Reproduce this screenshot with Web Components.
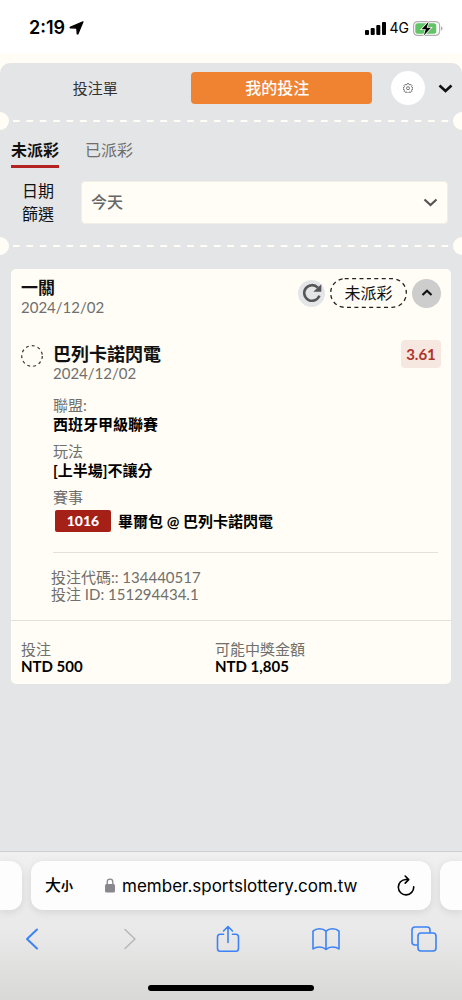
<!DOCTYPE html>
<html lang="zh-Hant">
<head>
<meta charset="utf-8">
<meta name="viewport" content="width=device-width, initial-scale=1">
<title>我的投注</title>
<style>
  :root {
    --cream: #fffdf5;
    --grey: #e4e5e7;
    --orange: #ef8332;
    --red: #b3231f;
    --muted: #6f6f6d;
    --rule: #e5e0d8;
    --ui: Inter, "Noto Sans CJK TC", sans-serif;
  }
  body {
    margin: 0;
    background: #fff;
    font: 15px/18px Lato, "Noto Sans CJK TC", sans-serif;
    color: #111;
  }
</style>
</head>
<body>
<phone-app></phone-app>

<script>
const define = (name, css, html) => {
  customElements.define(name, class extends HTMLElement {
    constructor() {
      super();
      this.attachShadow({ mode: 'open' }).innerHTML =
        `<style>*{box-sizing:border-box}button{font:inherit;color:inherit;border:0;padding:0;background:none}svg{display:block}${css}</style>${html}`;
    }
  });
};

define('status-bar', `
  :host { display: flex; align-items: center; justify-content: space-between; height: 53px; box-sizing: border-box;
          padding: 3px 18px 0 29px; background: #fff; color: #000; font-family: var(--ui); }
  div { display: flex; align-items: center; gap: 4px; }
  time { font-size: 18px; font-weight: 600; }
  .net { font-size: 14px; }
`, `
  <div>
    <time>2:19</time>
    <svg width="15" height="14" viewBox="0 0 15 14" aria-hidden="true"><path d="M14 .8 8.900 13 8.200 12.900 7.800 7.100 1.200 6.800 1.100 6.200Z" fill="#000" stroke="#000" stroke-width="1.200" stroke-linejoin="round"/></svg>
  </div>
  <div>
    <svg width="21" height="13" viewBox="0 0 21 13" aria-hidden="true"><rect y="8" width="4" height="5" rx="1"/><rect x="5.700" y="6" width="4" height="7" rx="1"/><rect x="11.300" y="3" width="4" height="10" rx="1"/><rect x="17" width="4" height="13" rx="1"/></svg>
    <span class="net">4G</span>
    <svg width="31" height="15" viewBox="0 0 31 15" aria-hidden="true">
      <rect x=".6" y=".6" width="26" height="13.800" rx="4" fill="#fff" stroke="#b0b0b0" stroke-width="1.200"/>
      <rect x="2.300" y="2.300" width="21" height="10.400" rx="2.500" fill="#62c466"/>
      <path d="M28 5.300q1.600.8 1.600 2.200T28 9.700Z" fill="#b0b0b0"/>
      <path d="M15.600.8 8.600 8.200h4.200l-2 6.200 7.200-7.600h-4.300Z" stroke="#fff" stroke-width="1.500" paint-order="stroke"/>
    </svg>
  </div>
`);

define('tab-header', `
  :host { display: flex; align-items: center; padding: 8px 9px 0 0; }
  nav { flex: 1; display: grid; grid-template-columns: 21fr 20fr; }
  .tab { height: 32px; border-radius: 4px; color: #333; }
  .tab[aria-selected=true] { padding-right: 8px; background: var(--orange); color: #fff; font-size: 16px; font-weight: 500; }
  .gear { display: grid; place-items: center; width: 34px; height: 34px; border-radius: 50%; background: #fff; margin: 0 13px 0 19px; }
`, `
  <nav role="tablist">
    <button class="tab" role="tab" aria-selected="false">投注單</button>
    <button class="tab" role="tab" aria-selected="true">我的投注</button>
  </nav>
  <button class="gear" aria-label="設定">
    <svg width="10" height="10" viewBox="0 0 10 10" fill="none" stroke="#555" stroke-width=".8" stroke-linejoin="round"><path d="M4.200.6h1.600l.3 1 .9.400.9-.6 1.100 1.100-.5.9.4.9 1 .3v1.600l-1 .2-.4.9.5.9-1.100 1.100-.9-.5-.9.400-.3 1H4.200l-.3-1-.9-.4-.9.500L1 8.200l.5-.9-.4-.9-1-.2V4.600l1-.3.4-.9L1 2.500l1.100-1.100.9.6.9-.4Z"/><circle cx="5" cy="5.200" r="1.500"/></svg>
  </button>
  <button aria-label="收合">
    <svg width="15" height="16" viewBox="0 0 15 16" fill="none" stroke="#111" stroke-width="2.600"><path d="m1.500 5.500 6 5.500 6-5.500"/></svg>
  </button>
`);

define('ticket-perforation', `
  :host { display: flex; align-items: center; justify-content: space-between; height: 18px; }
  i { width: 9px; height: 18px; background: var(--cream); border-radius: 0 9px 9px 0; }
  i:last-child { border-radius: 9px 0 0 9px; }
  hr { flex: 1; height: 2px; margin: 0 -2px 0 4px; border: 0;
       background: linear-gradient(90deg, var(--cream) 7px, transparent 7px) 0 0 / calc(100% / 33) 2px repeat-x; }
`, `<i></i><hr><i></i>`);

define('bet-filter', `
  :host { display: block; padding: 8px 14px 12px 11px; }
  nav { display: flex; gap: 26px; }
  nav button { height: 30px; padding: 0 0 3px; font-size: 16px; line-height: 24px; border-bottom: 3px solid transparent; color: var(--muted); }
  nav button[aria-selected=true] { font-weight: 700; color: #111; border-color: var(--red); }
  .row { display: flex; align-items: center; margin-top: 11px; }
  label { width: 54px; margin-right: 16px; padding: 0 11px; text-align: center; font-size: 16px; line-height: 23px; }
  .box { flex: 1; display: grid; align-items: center; }
  .box > * { grid-area: 1 / 1; }
  select { appearance: none; width: 100%; height: 43px; padding: 0 9px; border: 1px solid #f1eee4; border-radius: 4px;
           background: var(--cream); font: inherit; font-size: 16px; font-weight: 500; color: #666; }
  svg { justify-self: end; margin-right: 10px; pointer-events: none; }
`, `
  <nav role="tablist">
    <button role="tab" aria-selected="true">未派彩</button>
    <button role="tab" aria-selected="false">已派彩</button>
  </nav>
  <div class="row">
    <label for="day">日期篩選</label>
    <div class="box">
      <select id="day"><option>今天</option></select>
      <svg width="15" height="16" viewBox="0 0 15 16" fill="none" stroke="#555" stroke-width="2.200"><path d="m1.500 5.500 6 5.500 6-5.500"/></svg>
    </div>
  </div>
`);

define('info-pair', `
  :host { display: block; }
  .k { color: var(--muted); line-height: var(--pair-line, 19px); }
  .v { font-weight: 700; color: #000; line-height: var(--pair-line, 19px); }
`, `<div class="k"><slot name="label"></slot></div><div class="v"><slot></slot></div>`);

define('match-code', `
  :host { display: flex; align-items: center; gap: 7px; margin-left: 2px; padding-top: 3px; font-weight: 700; color: #000; }
  b { width: 56px; border-radius: 2px; background: #a52017; color: #fff; font-size: 14px; line-height: 22px; text-align: center; }
`, `<b><slot name="code"></slot></b><span><slot></slot></span>`);

define('bet-card', `
  :host { display: block; margin: 14px 11px 0; border-radius: 5px; background: var(--cream); color: var(--muted); }
  h2, h3 { margin: 0; font-size: 18px; line-height: 20px; font-weight: 700; color: #111; }
  h2 { font-size: 17px; }
  header { display: flex; align-items: flex-start; justify-content: space-between; padding: 9px 10px 0; }
  time { display: block; }
  .actions { display: flex; align-items: center; gap: 5px; }
  .refresh { display: grid; place-items: center; width: 27px; height: 27px; border-radius: 50%; background: #e3e5e7; }
  .state { display: grid; place-items: center; width: 77px; height: 30px; color: #111; font-size: 16px; }
  .state > * { grid-area: 1 / 1; }
  .fold { display: grid; place-items: center; width: 29px; height: 29px; border-radius: 50%; background: #cdcdcd; }
  .pick { display: grid; grid-template-columns: 22px minmax(0, 1fr) auto; column-gap: 10px; padding: 24px 10px 0; }
  .ring { margin-top: 5px; }
  .pick-head { padding-top: 4px; }
  .odds { align-self: start; width: 40px; border-radius: 4px; background: #f6e7e0; color: #b0342a; font-weight: 700; line-height: 28px; text-align: center; }
  .detail { grid-column: 2 / -1; display: grid; gap: 8px; margin: 14px 3px 0 0; padding-bottom: 20px; border-bottom: 1px solid var(--rule); }
  .ids { padding: 16px 40px 17px; line-height: 17px; border-bottom: 1px solid var(--rule); }
  .ids p { margin: 0; }
  footer { display: grid; grid-template-columns: 194px 1fr; padding: 20px 10px 9px; --pair-line: 17px; }
`, `
  <header>
    <div><h2>一關</h2><time>2024/12/02</time></div>
    <div class="actions">
      <button class="refresh" aria-label="重新整理">
        <svg width="20" height="20" viewBox="0 0 20 20"><path d="M17.400 12.600A7.800 7.800 0 1 1 15.800 4.700" fill="none" stroke="#555658" stroke-width="2.600"/><path d="M19.300 1.200v7.600h-8Z" fill="#555658"/></svg>
      </button>
      <span class="state">
        <svg width="77" height="30" viewBox="0 0 77 30" fill="none" aria-hidden="true"><rect x=".7" y=".7" width="75.600" height="28.600" rx="14" stroke="#222" stroke-width="1.300" stroke-dasharray="4 3.400"/></svg>
        <span>未派彩</span>
      </span>
      <button class="fold" aria-label="收合">
        <svg width="12" height="10" viewBox="0 0 12 10" fill="none" stroke="#111" stroke-width="2.200"><path d="M1.500 7 6 2.800 10.500 7"/></svg>
      </button>
    </div>
  </header>
  <section class="pick">
    <svg class="ring" width="22" height="22" viewBox="0 0 22 22" fill="none" aria-hidden="true"><circle cx="11" cy="11" r="10.300" stroke="#333" stroke-width="1.200" stroke-dasharray="2.900 3.100"/></svg>
    <div class="pick-head"><h3>巴列卡諾閃電</h3><time>2024/12/02</time></div>
    <span class="odds">3.61</span>
    <div class="detail">
      <info-pair><span slot="label">聯盟:</span>西班牙甲級聯賽</info-pair>
      <info-pair><span slot="label">玩法</span>[上半場]不讓分</info-pair>
      <info-pair><span slot="label">賽事</span><match-code><span slot="code">1016</span>畢爾包 @ 巴列卡諾閃電</match-code></info-pair>
    </div>
  </section>
  <div class="ids"><p>投注代碼:: 134440517</p><p>投注 ID: 151294434.1</p></div>
  <footer>
    <info-pair><span slot="label">投注</span>NTD 500</info-pair>
    <info-pair><span slot="label">可能中獎金額</span>NTD 1,805</info-pair>
  </footer>
`);

define('browser-bar', `
  :host { display: block; border-top: 1px solid #cfcfd0; background: linear-gradient(#f0f0f1, #e9e9e9 55%, #d8d8d7); font-family: var(--ui); overflow: hidden; color: #000; }
  .cards { display: flex; gap: 9px; padding-top: 9px; }
  .side, form { height: 49px; background: #fdfdfd; border-radius: 12px; box-shadow: 0 2px 8px #0000001a; }
  .side { width: 22px; }
  .side:first-child { border-radius: 0 12px 12px 0; }
  .side:last-child { border-radius: 12px 0 0 12px; }
  form { flex: 1; min-width: 0; display: flex; align-items: center; padding: 0 16px 0 14px; }
  .size { display: flex; align-items: baseline; margin-right: 32px; font-size: 16px; font-weight: 500; }
  .size small { font-size: 12px; font-weight: 700; }
  input { flex: 1; min-width: 0; margin-left: 7px; padding: 0; border: 0; background: none; font: inherit; font-size: 17px; line-height: 24px; color: #000; }
  nav { display: flex; justify-content: space-between; align-items: center; height: 57px; padding: 0 24px 0 18px; color: #3d82f6; }
  nav button { display: grid; place-items: center; width: 28px; }
  nav svg, form button svg { fill: none; stroke: currentColor; }
  nav button:disabled { color: #b8b8b8; }
  .home { width: 166px; height: 6px; margin: 18px auto 9px; border-radius: 3px; background: #000; }
`, `
  <div class="cards">
    <div class="side"></div>
    <form>
      <button class="size" type="button" aria-label="文字大小"><span>大</span><small>小</small></button>
      <svg width="10" height="15" viewBox="0 0 10 15" aria-hidden="true"><rect y="6" width="10" height="8.500" rx="1.500" fill="#88888c"/><path d="M2.200 6.500V4a2.800 2.800 0 0 1 5.600 0v2.500" fill="none" stroke="#88888c" stroke-width="1.300"/></svg>
      <input type="text" aria-label="網址" value="member.sportslottery.com.tw">
      <button type="button" aria-label="重新載入"><svg width="18" height="22" viewBox="0 0 18 22" stroke-width="1.600" stroke-linecap="round" stroke-linejoin="round"><path d="M16.700 11.800A7.700 7.700 0 1 1 9 4.500h2.200M8.200 1l3.500 3.600-3.500 3.500"/></svg></button>
    </form>
    <div class="side"></div>
  </div>
  <nav>
    <button aria-label="上一頁"><svg width="14" height="22" viewBox="0 0 14 22" stroke-width="2" stroke-linecap="round" stroke-linejoin="round"><path d="M12 1.500 2 11l10 9.500"/></svg></button>
    <button aria-label="下一頁" disabled><svg width="14" height="22" viewBox="0 0 14 22" stroke-width="1.600" stroke-linecap="round" stroke-linejoin="round"><path d="m2 1.500 10 9.500L2 20.500"/></svg></button>
    <button aria-label="分享"><svg width="24" height="28" viewBox="0 0 24 28" stroke-width="1.600" stroke-linecap="round" stroke-linejoin="round"><path d="M7.500 9.200H4.200Q1.500 9.200 1.500 12v11.500q0 2.800 2.700 2.800h15.600q2.700 0 2.700-2.800V12q0-2.800-2.700-2.800h-3.300M12 17.500V1.500M7.500 6 12 1.500 16.500 6"/></svg></button>
    <button aria-label="書籤"><svg width="28" height="24" viewBox="0 0 28 24" stroke-width="1.600" stroke-linejoin="round"><path d="M14 4.200Q11.500 1.800 7.500 1.800T1 4.200V22q2.500-2 6.500-2t6.500 2.500Q16.500 20 20.500 20t6.500 2V4.200q-2.500-2.400-6.500-2.400T14 4.200Zm0 0v18.300"/></svg></button>
    <button aria-label="分頁"><svg width="26" height="26" viewBox="0 0 26 26" stroke-width="1.600" stroke-linejoin="round"><rect x="7" y="7" width="18" height="18" rx="3"/><path d="M7 19H4q-3 0-3-3V4q0-3 3-3h12q3 0 3 3v3"/></svg></button>
  </nav>
  <div class="home"></div>
`);

define('phone-app', `
  :host { display: flex; flex-direction: column; min-height: 100vh; }
  main { flex: 1; padding-top: 10px; background: var(--cream); display: grid; }
  .panel { padding-bottom: 20px; border-radius: 10px 10px 0 0; background: var(--grey); }
  .panel > :nth-child(2) { margin-top: 7px; }
`, `
  <status-bar></status-bar>
  <main><div class="panel">
    <tab-header></tab-header>
    <ticket-perforation></ticket-perforation>
    <bet-filter></bet-filter>
    <ticket-perforation></ticket-perforation>
    <bet-card></bet-card>
  </div></main>
  <browser-bar></browser-bar>
`);
</script>
</body>
</html>
